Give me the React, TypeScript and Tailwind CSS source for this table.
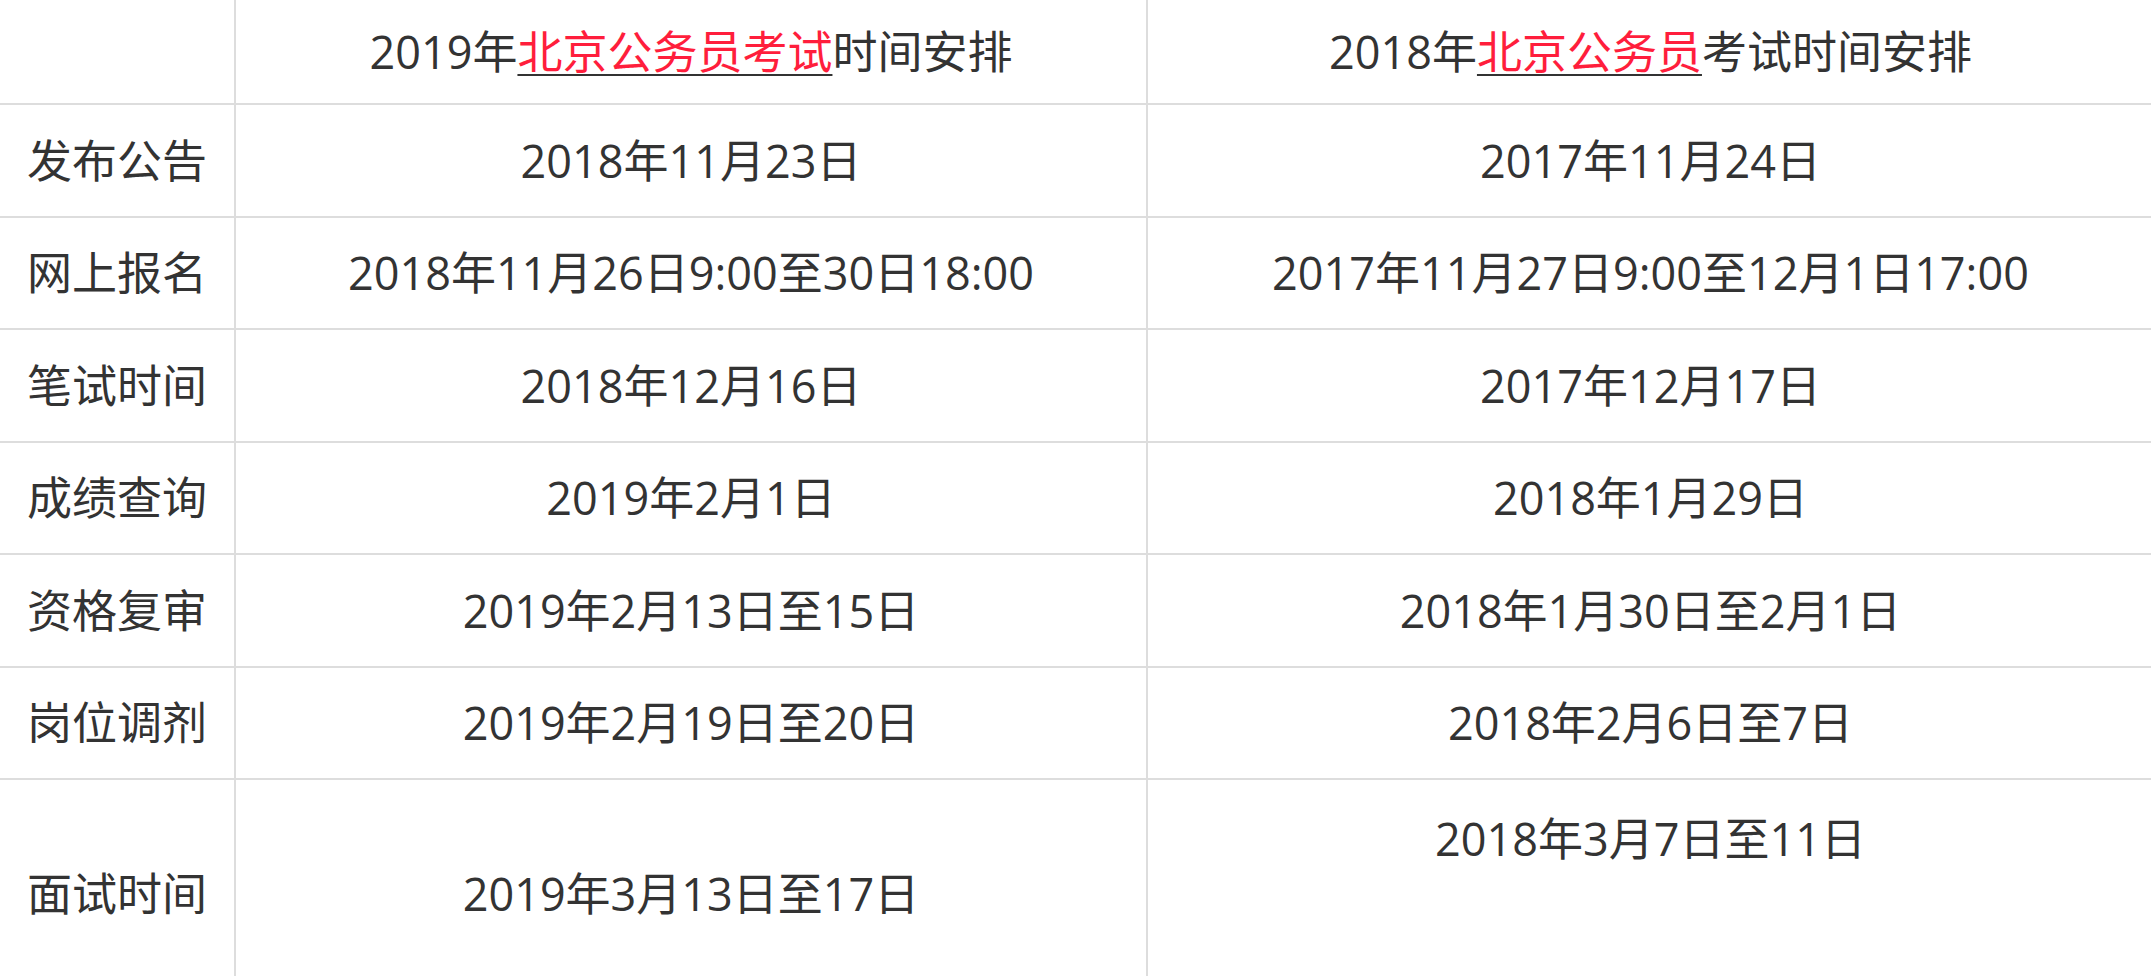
import React from "react";

const rows: [string, string, string][] = [
  ["发布公告", "2018年11月23日", "2017年11月24日"],
  ["网上报名", "2018年11月26日9:00至30日18:00", "2017年11月27日9:00至12月1日17:00"],
  ["笔试时间", "2018年12月16日", "2017年12月17日"],
  ["成绩查询", "2019年2月1日", "2018年1月29日"],
  ["资格复审", "2019年2月13日至15日", "2018年1月30日至2月1日"],
  ["岗位调剂", "2019年2月19日至20日", "2018年2月6日至7日"],
];

const cell = "bg-white flex items-center justify-center whitespace-nowrap";

export default function App() {
  return (
    <div
      className="w-[2151px] min-h-[976px] bg-white text-[#333] text-[45px] leading-[69px] overflow-hidden"
      style={{ fontFamily: '"Open Sans", "Noto Sans CJK SC", sans-serif' }}
    >
      <div className="grid grid-cols-[234px_910px_1005px] grid-rows-[103px_repeat(6,110.5px)_226px] gap-[2px] bg-[#dddddd] w-[2153px]">
        <div className={cell}></div>
        <div className={cell}>
          <span>
            2019年
            <a href="#" className="underline decoration-[#333] decoration-2 underline-offset-[5px]">
              <span className="text-[#ff1e3c]">北京公务员考试</span>
            </a>
            时间安排
          </span>
        </div>
        <div className={cell}>
          <span>
            2018年
            <a href="#" className="underline decoration-[#333] decoration-2 underline-offset-[5px]">
              <span className="text-[#ff1e3c]">北京公务员</span>
            </a>
            考试时间安排
          </span>
        </div>
        {rows.map(([a, b, c]) => (
          <React.Fragment key={a}>
            <div className={cell}>{a}</div>
            <div className={cell}>{b}</div>
            <div className={cell}>{c}</div>
          </React.Fragment>
        ))}
        <div className={cell}>面试时间</div>
        <div className={cell}>2019年3月13日至17日</div>
        <div className="bg-white flex items-start justify-center whitespace-nowrap pt-[24px]">
          2018年3月7日至11日
        </div>
      </div>
    </div>
  );
}
